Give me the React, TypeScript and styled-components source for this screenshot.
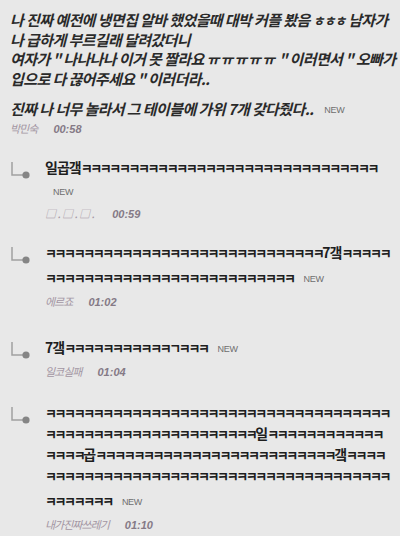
import React from 'react';
import styled, { createGlobalStyle } from 'styled-components';

const GlobalStyle = createGlobalStyle`
  html, body {
    margin: 0;
    padding: 0;
    background: #e8e8e8;
  }
  body {
    font-family: "Noto Sans CJK KR", "Noto Sans", sans-serif;
  }
`;

const Page = styled.div`
  width: 400px;
  height: 536px;
  overflow: hidden;
  background: #e8e8e8;
  color: #262626;
`;

const Post = styled.article`
  padding: 10px 0 0 10px;
`;

const PostLine = styled.div<{ $gap?: number }>`
  margin-top: ${p => p.$gap ?? 0}px;
  font-size: 15px;
  line-height: 19px;
  letter-spacing: -0.6px;
  font-weight: 700;
  font-style: italic;
  white-space: nowrap;
  color: #2a2a2a;
`;

const Laugh = styled.span<{ $size?: number; $ls?: number }>`
  font-size: ${p => p.$size ?? 13}px;
  letter-spacing: ${p => p.$ls ?? -2.4}px;
`;

const New = styled.span<{ $ml?: number }>`
  display: inline-block;
  margin-left: ${p => p.$ml ?? 10}px;
  font-family: "Liberation Sans", Arial, sans-serif;
  font-size: 9px;
  font-weight: 400;
  font-style: normal;
  letter-spacing: -0.3px;
  color: #6e6e6e;
  vertical-align: middle;
  line-height: 1;
`;

const Meta = styled.div<{ $gap?: number }>`
  margin-top: ${p => p.$gap ?? 3}px;
  line-height: 20px;
  font-size: 11px;
  white-space: nowrap;
`;

const Author = styled.span<{ $ls?: number }>`
  color: #a396a3;
  letter-spacing: ${p => p.$ls ?? -1}px;
  font-style: italic;
  margin-right: 16px;
`;

const Time = styled.span`
  font-family: "Liberation Sans", Arial, sans-serif;
  font-weight: 700;
  font-style: italic;
  color: #857a86;
`;

const Reply = styled.div<{ $top: number }>`
  display: flex;
  margin-top: ${p => p.$top}px;
  padding-left: 10px;
`;

const Branch = styled.svg`
  flex: none;
  width: 35px;
  height: 24px;
`;

const ReplyBody = styled.div`
  min-width: 0;
`;

const ReplyLine = styled.div<{ $gap?: number; $indent?: number }>`
  margin-top: ${p => p.$gap ?? 0}px;
  padding-left: ${p => p.$indent ?? 0}px;
  font-size: 14px;
  line-height: 20px;
  font-weight: 700;
  letter-spacing: -1px;
  white-space: nowrap;
  color: #1e1e1e;
`;

const k = (n: number) => 'ㅋ'.repeat(n);

function BranchIcon() {
  return (
    <Branch viewBox="0 0 35 24">
      <path d="M2 5 V18 H13" fill="none" stroke="#a0a0a0" strokeWidth="1.5" />
      <circle cx="16" cy="18" r="3.6" fill="#858585" />
    </Branch>
  );
}

export default function App() {
  return (
    <Page>
      <GlobalStyle />
      <Post>
        <PostLine>나 진짜 예전에 냉면집 알바 했었을때 대박 커플 봤음 <Laugh $size={13} $ls={-1}>ㅎㅎㅎ</Laugh> 남자가</PostLine>
        <PostLine>나 급하게 부르길래 달려갔더니</PostLine>
        <PostLine>여자가 " 나나나나 이거 못 짤라요 <Laugh $size={14} $ls={1}>ㅠㅠㅠㅠㅠ</Laugh> " 이러면서 " 오빠가</PostLine>
        <PostLine>입으로 다 끊어주세요 " 이러더라..</PostLine>
        <PostLine $gap={11}>
          진짜 나 너무 놀라서 그 테이블에 가위 7개 갖다줬다..<New $ml={11}>NEW</New>
        </PostLine>
        <Meta $gap={0}>
          <Author>박민숙</Author>
          <Time>00:58</Time>
        </Meta>
      </Post>

      <Reply $top={18}>
        <BranchIcon />
        <ReplyBody>
          <ReplyLine>일곱갴<Laugh>{k(31)}</Laugh></ReplyLine>
          <ReplyLine $gap={2} $indent={8}><New $ml={0}>NEW</New></ReplyLine>
          <Meta>
            <Author $ls={1.5}>□.□.□.</Author>
            <Time>00:59</Time>
          </Meta>
        </ReplyBody>
      </Reply>

      <Reply $top={18}>
        <BranchIcon />
        <ReplyBody>
          <ReplyLine><Laugh>{k(29)}</Laugh>7갴<Laugh>{k(5)}</Laugh></ReplyLine>
          <ReplyLine $gap={4}><Laugh>{k(26)}</Laugh><New>NEW</New></ReplyLine>
          <Meta>
            <Author>에르죠</Author>
            <Time>01:02</Time>
          </Meta>
        </ReplyBody>
      </Reply>

      <Reply $top={25}>
        <BranchIcon />
        <ReplyBody>
          <ReplyLine>7갴<Laugh>{k(11) + 'ㄱ' + k(3)}</Laugh><New>NEW</New></ReplyLine>
          <Meta>
            <Author>일코실패</Author>
            <Time>01:04</Time>
          </Meta>
        </ReplyBody>
      </Reply>

      <Reply $top={20}>
        <BranchIcon />
        <ReplyBody>
          <ReplyLine><Laugh>{k(36)}</Laugh></ReplyLine>
          <ReplyLine><Laugh>{k(22)}</Laugh>일<Laugh>{k(12)}</Laugh></ReplyLine>
          <ReplyLine><Laugh>{k(4)}</Laugh>곱<Laugh>{k(25)}</Laugh>갴<Laugh>{k(4)}</Laugh></ReplyLine>
          <ReplyLine><Laugh>{k(36)}</Laugh></ReplyLine>
          <ReplyLine $gap={4}><Laugh>{k(7)}</Laugh><New>NEW</New></ReplyLine>
          <Meta>
            <Author>내가진짜쓰레기</Author>
            <Time>01:10</Time>
          </Meta>
        </ReplyBody>
      </Reply>
    </Page>
  );
}
